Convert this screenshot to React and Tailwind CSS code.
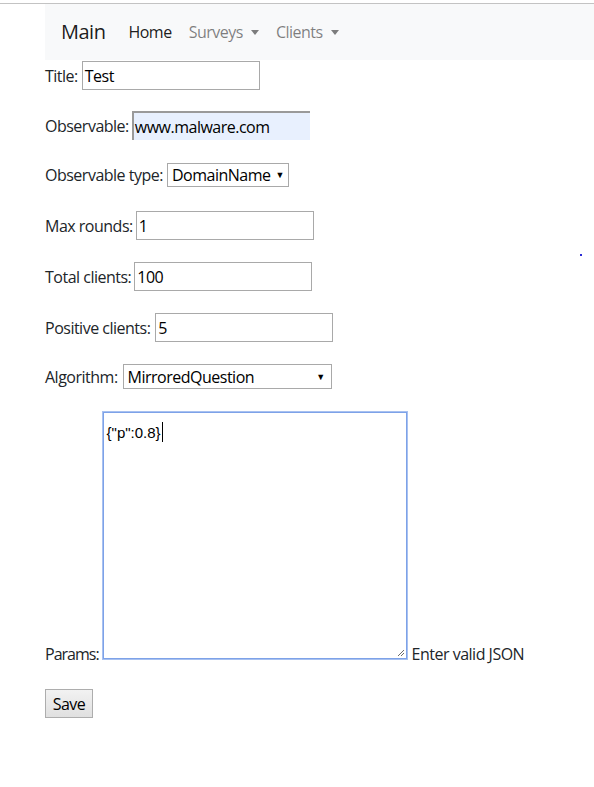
export default function App() {
  const font = { fontFamily: '"Open Sans", "Noto Sans", sans-serif' };
  return (
    <div className="relative w-[594px] h-[787px] bg-white text-[#212529] text-[16px] tracking-[-0.5px]" style={font}>
      {/* top rule */}
      <div className="h-[3px]" />
      <div className="border-t border-[#c3c3c3]" />

      {/* Navbar */}
      <div className="ml-[45px] h-[56px] bg-[#f8f9fa] flex items-center pl-[16px]">
        <span className="text-[20px] text-black/90 mr-[23px]">Main</span>
        <span className="text-black/90 mr-[17px]">Home</span>
        <span className="text-black/50 flex items-center mr-[17px]">
          Surveys
          <span className="ml-[8px] w-0 h-0 border-t-[5px] border-t-black/50 border-x-[4.5px] border-x-transparent" />
        </span>
        <span className="text-black/50 flex items-center">
          Clients
          <span className="ml-[8px] w-0 h-0 border-t-[5px] border-t-black/50 border-x-[4.5px] border-x-transparent" />
        </span>
      </div>

      <div className="pl-[45px] flex flex-col">
        <div className="flex items-center h-[29px] mt-[1px]">
          <span>Title:</span>
          <div className="ml-[4px] w-[178px] h-[29px] border border-[#a9a9a9] px-[2px] flex items-center text-black">Test</div>
        </div>

        <div className="flex items-center h-[29px] mt-[21px]">
          <span>Observable:</span>
          <div className="ml-[3px] w-[178px] h-[29px] bg-[#e8f0fe] border-t-2 border-l-2 border-[#9a9a9a] px-[1px] flex items-center text-black">www.malware.com</div>
        </div>

        <div className="flex items-center h-[24px] mt-[23px]">
          <span>Observable type:</span>
          <div className="ml-[4px] w-[122px] h-[24px] border border-[#a9a9a9] bg-white pl-[4px] pr-[4px] flex items-center justify-between text-black">
            <span>DomainName</span>
            <span className="text-[9px]">▼</span>
          </div>
        </div>

        <div className="flex items-center h-[29px] mt-[24px]">
          <span>Max rounds:</span>
          <div className="ml-[3px] w-[178px] h-[29px] border border-[#a9a9a9] px-[2px] flex items-center text-black">1</div>
        </div>

        <div className="flex items-center h-[29px] mt-[22px]">
          <span>Total clients:</span>
          <div className="ml-[3px] w-[178px] h-[29px] border border-[#a9a9a9] px-[2px] flex items-center text-black">100</div>
        </div>

        <div className="flex items-center h-[29px] mt-[22px]">
          <span>Positive clients:</span>
          <div className="ml-[5px] w-[178px] h-[29px] border border-[#a9a9a9] px-[2px] flex items-center text-black">5</div>
        </div>

        <div className="flex items-center h-[25px] mt-[22px]">
          <span>Algorithm:</span>
          <div className="ml-[5px] w-[209px] h-[25px] border border-[#a9a9a9] bg-white pl-[4px] pr-[6px] flex items-center justify-between text-black">
            <span>MirroredQuestion</span>
            <span className="text-[9px]">▼</span>
          </div>
        </div>

        <div className="flex items-end mt-[23px]">
          <span className="mb-[-7px] tracking-[-1px]">Params:</span>
          <div className="relative ml-[4px] w-[304px] h-[247px] border border-[#7da2e8] outline outline-1 outline-[#a8c1f0]">
            <div className="pl-[3px] pt-[9px] text-[15px] leading-[17px] tracking-normal text-black flex items-center" style={{ fontFamily: '"Liberation Sans", Arial, sans-serif' }}>
              <span>{'{"p":0.8}'}</span>
              <span className="ml-[1px] w-px h-[20px] bg-black" />
            </div>
            <svg className="absolute right-[1px] bottom-[1px]" width="10" height="10" viewBox="0 0 10 10">
              <path d="M9 3 L3 9 M9 6 L6 9" stroke="#6b6b6b" strokeWidth="1" />
            </svg>
          </div>
          <span className="ml-[5px] mb-[-7px]">Enter valid JSON</span>
        </div>

        <div className="mt-[30px]">
          <div className="w-[48px] h-[29px] border border-[#adadad] bg-gradient-to-b from-[#f2f2f2] to-[#e0e0e0] flex items-center justify-center text-black">Save</div>
        </div>
      </div>

      <span className="absolute left-[580px] top-[254px] w-[2px] h-[2px] bg-[#2b2bd6]" />
    </div>
  );
}
